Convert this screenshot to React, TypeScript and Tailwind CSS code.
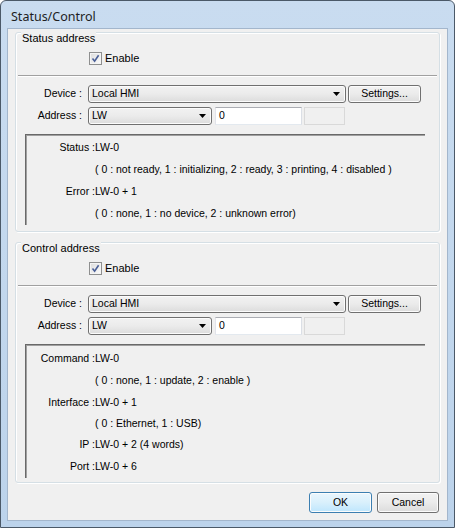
import type { ReactNode } from 'react'

// Shared look for the push buttons and drop-down boxes
const raised =
  'rounded-[3px] border border-[#707070] bg-gradient-to-b from-[#f2f2f2] via-[#ebebeb] to-[#dcdcdc] shadow-[inset_0_0_0_1px_#fcfcfc]'

function CheckBox({ label }: { label: string }) {
  return (
    <div className="flex h-[13px] items-center gap-[3px] pl-[73px]">
      <span className="flex h-[13px] w-[13px] items-center justify-center border border-[#8e8f8f] bg-gradient-to-br from-[#dcdcdc] to-[#fbfbfb] shadow-[inset_0_0_0_1px_#f4f4f4]">
        <svg width="9" height="9" viewBox="0 0 9 9">
          <path d="M1.5 4.6 L3.6 7.2 L7.6 1.2" fill="none" stroke="#4a5f97" strokeWidth="1.6" />
        </svg>
      </span>
      <span className="text-[11px]">{label}</span>
    </div>
  )
}

function DropDown({ value, width }: { value: string; width: string }) {
  return (
    <div className={`flex h-[18px] items-center justify-between pl-[3px] pr-[5px] ${raised} ${width}`}>
      <span>{value}</span>
      <svg width="7" height="4" viewBox="0 0 7 4">
        <path d="M0 0 H7 L3.5 4 Z" fill="#000" />
      </svg>
    </div>
  )
}

function Field({ label, children }: { label: string; children: ReactNode }) {
  return (
    <div className="flex items-center gap-[6px]">
      <span className="w-[66px] text-right">{label}</span>
      {children}
    </div>
  )
}

function InfoRow({ label, value, h = 'h-[22px]' }: { label?: string; value: string; h?: string }) {
  return (
    <div className={`flex items-center ${h}`}>
      <span className="w-[69px] shrink-0 whitespace-pre text-right">{label ? label + ' :' : ''}</span>
      <span className="whitespace-pre">{value}</span>
    </div>
  )
}

function AddressGroup({ title, rows, className }: { title: string; rows: ReactNode; className: string }) {
  return (
    <div className={`mx-[7px] rounded-[3px] border border-[#d5dfe5] shadow-[inset_1px_1px_0_#ffffff,1px_1px_0_#ffffff] ${className}`}>
      <div className="-mt-[2px] ml-[5px] w-fit bg-[#f0f0f0] px-[1px] text-[11px] leading-[14px]">{title}</div>
      <div className="mt-[7px]">
        <CheckBox label="Enable" />
      </div>
      <div className="mx-[2px] mt-[10px] h-px bg-[#a0a0a0] shadow-[0_1px_0_#ffffff]" />
      <div className="mt-[9px] flex flex-col gap-[4px]">
        <Field label="Device :">
          <DropDown value="Local HMI" width="w-[258px]" />
          <button className={`-ml-[4px] h-[18px] w-[73px] ${raised}`}>Settings...</button>
        </Field>
        <Field label="Address :">
          <DropDown value="LW" width="w-[124px]" />
          <div className="-ml-[3px] flex h-[18px] w-[87px] items-center border border-[#abadb3] border-b-[#e3e9ef] border-l-[#e2e3ea] border-r-[#dbdfe6] bg-white pl-[3px]">
            0
          </div>
          <div className="-ml-[4px] h-[18px] w-[41px] border border-[#d9d9d9] bg-[#f0f0f0]" />
        </Field>
      </div>
      <div className="ml-[9px] mt-[9px] w-[400px] border-l border-t border-[#696969] border-b-white border-r-white shadow-[inset_1px_1px_0_#a0a0a0]">
        {rows}
      </div>
    </div>
  )
}

export default function App() {
  return (
    <div
      className="flex h-[528px] w-[455px] flex-col rounded-t-[6px] border border-[#4b5968] bg-gradient-to-b from-[#c9dcf0] to-[#bcd3eb] text-[10.5px] text-black"
      style={{ fontFamily: '"Liberation Sans", Arial, sans-serif' }}
    >
      <div className="flex h-[27px] shrink-0 items-center pl-[10px] pt-[5px] text-[12.5px] text-[#1e1e1e]" style={{ fontFamily: '"Noto Sans", "Open Sans", sans-serif' }}>
        Status/Control
      </div>

      <div className="mx-[6px] flex flex-1 flex-col border border-[#a3b6cc] bg-[#f0f0f0]">
        <AddressGroup
          title="Status address"
          className="mt-[3px] pb-[2px]"
          rows={
            <div className="pt-[2px]">
              <InfoRow label="Status" value="LW-0" />
              <InfoRow value="( 0 : not ready, 1 : initializing, 2 : ready, 3 : printing, 4 : disabled )" />
              <InfoRow label="Error" value="LW-0 + 1" />
              <InfoRow value="( 0 : none, 1 : no device, 2 : unknown error)" h="h-[22px] mb-[4px]" />
            </div>
          }
        />

        <AddressGroup
          title="Control address"
          className="mt-[10px] pb-[3px]"
          rows={
            <div className="pt-[2px]">
              <InfoRow label="Command" value="LW-0" h="h-[23px]" />
              <InfoRow value="( 0 : none, 1 : update, 2 : enable )" />
              <InfoRow label="Interface" value="LW-0 + 1" h="h-[21px]" />
              <InfoRow value="( 0 : Ethernet, 1 : USB)" h="h-[21px]" />
              <InfoRow label="IP" value="LW-0 + 2 (4 words)" />
              <InfoRow label="Port" value="LW-0 + 6" h="h-[22px] mb-[1px]" />
            </div>
          }
        />

        <div className="mt-auto mb-[7px] flex justify-end gap-[5px] pr-[8px]">
          <button className="h-[21px] w-[63px] rounded-[3px] border border-[#3c7fb1] bg-gradient-to-b from-[#eaf6fd] via-[#d9f0fc] to-[#bee6fd] shadow-[inset_0_0_0_1px_#fcfcfc]">
            OK
          </button>
          <button className={`h-[21px] w-[62px] ${raised}`}>Cancel</button>
        </div>
      </div>
      <div className="h-[6px] shrink-0" />
    </div>
  )
}
